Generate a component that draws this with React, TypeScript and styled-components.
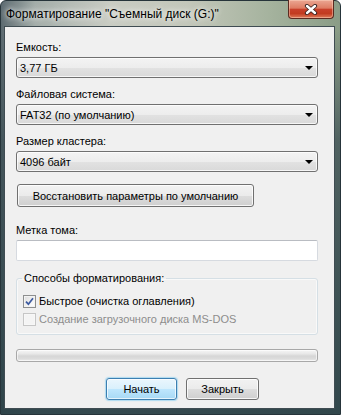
import styled, { createGlobalStyle } from "styled-components";

const GlobalStyle = createGlobalStyle`
  html, body {
    margin: 0;
    padding: 0;
    background: #ffffff;
  }
  body {
    font-family: "Liberation Sans", Arial, sans-serif;
    font-size: 12px;
    color: #000;
  }
`;

const Window = styled.div`
  box-sizing: border-box;
  width: 341px;
  height: 415px;
  padding: 0 5px 5px 3px;
  border: 1px solid #26343a;
  border-radius: 6px 6px 0 0;
  display: flex;
  flex-direction: column;
  background:
    linear-gradient(180deg, rgba(52, 72, 78, 0) 0, rgba(52, 72, 78, 0) 28px, rgba(60, 78, 84, 0.75) 140px, rgba(44, 66, 72, 0.95) 100%),
    linear-gradient(90deg, #5c6a70 0%, #a3ada9 10%, #c9ccc3 32%, #c3c7ba 55%, #a4b29d 80%, #8a9c86 100%);
`;

const TitleBar = styled.div`
  height: 25px;
  display: flex;
  align-items: flex-start;
  justify-content: space-between;
`;

const Title = styled.span`
  margin: 6px 0 0 2px;
  line-height: 15px;
  white-space: nowrap;
  text-shadow: 0 0 5px rgba(255, 255, 255, 0.95), 0 0 10px rgba(255, 255, 255, 0.7);
`;

const CloseButton = styled.div`
  box-sizing: border-box;
  width: 46px;
  height: 19px;
  margin: -1px 1px 0 0;
  border: 1px solid #5b2a20;
  border-top: none;
  border-radius: 0 0 4px 4px;
  background: linear-gradient(180deg, #eba793 0%, #de7c63 45%, #c8402a 52%, #c23b20 75%, #dd7a58 100%);
  box-shadow: inset 0 0 0 1px rgba(255, 220, 200, 0.45);
  display: flex;
  align-items: center;
  justify-content: center;
`;

const Client = styled.div`
  flex: 1;
  font-size: 11px;
  background: #f0f0f0;
  border: 1px solid #3f4c52;
  padding: 13px 0 0 11px;
  display: flex;
  flex-direction: column;
  align-items: flex-start;
`;

const Label = styled.label`
  display: block;
  line-height: 15px;
  margin-bottom: 2px;
`;

const Combo = styled.div`
  box-sizing: border-box;
  width: 302px;
  height: 21px;
  margin-bottom: 9px;
  padding: 0 4px 0 3px;
  border: 1px solid #707070;
  border-radius: 3px;
  background: linear-gradient(180deg, #f3f3f3 0%, #ededed 50%, #e2e2e2 51%, #d9d9d9 100%);
  box-shadow: inset 0 0 0 1px rgba(255, 255, 255, 0.75);
  display: flex;
  align-items: center;
  justify-content: space-between;
`;

const Arrow = styled.span`
  width: 0;
  height: 0;
  border-left: 4px solid transparent;
  border-right: 4px solid transparent;
  border-top: 4px solid #000;
`;

const Button = styled.button<{ $primary?: boolean; $width: number }>`
  box-sizing: border-box;
  width: ${(p) => p.$width}px;
  height: 22px;
  padding: 0;
  border: 1px solid ${(p) => (p.$primary ? "#3c7fb1" : "#707070")};
  border-radius: 3px;
  font: inherit;
  color: #000;
  background: ${(p) =>
    p.$primary
      ? "linear-gradient(180deg, #eaf6fd 0%, #d9f0fc 50%, #bee6fd 51%, #a7d9f5 100%)"
      : "linear-gradient(180deg, #f2f2f2 0%, #ebebeb 50%, #dddddd 51%, #cfcfcf 100%)"};
  box-shadow: ${(p) =>
    p.$primary
      ? "inset 0 0 0 1px rgba(255,255,255,0.7), 0 0 1px 1px rgba(120, 200, 240, 0.55)"
      : "inset 0 0 0 1px rgba(255,255,255,0.8)"};
`;

const RestoreButton = styled(Button)`
  height: 23px;
  margin: 3px 0 16px 1px;
`;

const TextBox = styled.div`
  box-sizing: border-box;
  width: 302px;
  height: 21px;
  margin-bottom: 10px;
  border: 1px solid #d6dae0;
  border-top-color: #b9bcc2;
  border-radius: 2px;
  background: #fff;
`;

const Group = styled.fieldset`
  box-sizing: border-box;
  width: 302px;
  margin: 0;
  padding: 6px 0 6px 5px;
  min-width: 0;
  border: 1px solid #d5dfe5;
  border-radius: 3px;
  box-shadow: inset 0 0 0 1px rgba(255, 255, 255, 0.6);
`;

const Legend = styled.legend`
  padding: 0 2px;
  line-height: 15px;
`;

const CheckRow = styled.div<{ $disabled?: boolean }>`
  height: 18px;
  padding-left: 1px;
  display: flex;
  align-items: center;
  gap: 3px;
  color: ${(p) => (p.$disabled ? "#8d8d8d" : "#000")};
`;

const Box = styled.span<{ $disabled?: boolean }>`
  box-sizing: border-box;
  width: 13px;
  height: 13px;
  border: 1px solid ${(p) => (p.$disabled ? "#c6c6c6" : "#8e8f8f")};
  background: ${(p) =>
    p.$disabled
      ? "#f4f4f4"
      : "linear-gradient(135deg, #dcdcdc 0%, #f4f4f4 60%, #ffffff 100%)"};
  box-shadow: inset 0 0 0 1px ${(p) => (p.$disabled ? "#f7f7f7" : "#f3f3f3")};
  display: flex;
  align-items: center;
  justify-content: center;
`;

const Progress = styled.div`
  box-sizing: border-box;
  width: 302px;
  height: 13px;
  margin-top: 14px;
  border: 1px solid #a8a8a8;
  border-radius: 3px;
  background: linear-gradient(180deg, #f6f6f6 0%, #e8e8e8 35%, #d6d6d6 55%, #dcdcdc 80%, #ececec 100%);
  box-shadow: inset 0 0 0 1px rgba(255, 255, 255, 0.6);
`;

const ButtonRow = styled.div`
  display: flex;
  gap: 9px;
  margin: 16px 0 0 90px;
`;

const CloseIcon = () => (
  <svg width="14" height="11" viewBox="0 0 14 11">
    <path d="M3 2 L11 9 M11 2 L3 9" stroke="#3a2320" strokeWidth="4.2" strokeLinecap="round" />
    <path d="M3 2 L11 9 M11 2 L3 9" stroke="#ffffff" strokeWidth="2.4" strokeLinecap="round" />
  </svg>
);

const Check = () => (
  <svg width="9" height="9" viewBox="0 0 9 9">
    <path d="M1 4.6 L3.4 7.2 L8 1.2" fill="none" stroke="#3c5aa0" strokeWidth="1.7" />
  </svg>
);

const fields = [
  { label: "Емкость:", value: "3,77 ГБ" },
  { label: "Файловая система:", value: "FAT32 (по умолчанию)" },
  { label: "Размер кластера:", value: "4096 байт" },
];

export default function App() {
  return (
    <>
      <GlobalStyle />
      <Window>
        <TitleBar>
          <Title>Форматирование "Съемный диск (G:)"</Title>
          <CloseButton>
            <CloseIcon />
          </CloseButton>
        </TitleBar>
        <Client>
          {fields.map((f) => (
            <div key={f.label}>
              <Label>{f.label}</Label>
              <Combo>
                <span>{f.value}</span>
                <Arrow />
              </Combo>
            </div>
          ))}
          <RestoreButton $width={237}>Восстановить параметры по умолчанию</RestoreButton>
          <Label>Метка тома:</Label>
          <TextBox />
          <Group>
            <Legend>Способы форматирования:</Legend>
            <CheckRow>
              <Box>
                <Check />
              </Box>
              Быстрое (очистка оглавления)
            </CheckRow>
            <CheckRow $disabled>
              <Box $disabled />
              Создание загрузочного диска MS-DOS
            </CheckRow>
          </Group>
          <Progress />
          <ButtonRow>
            <Button $primary $width={71}>Начать</Button>
            <Button $width={73}>Закрыть</Button>
          </ButtonRow>
        </Client>
      </Window>
    </>
  );
}
